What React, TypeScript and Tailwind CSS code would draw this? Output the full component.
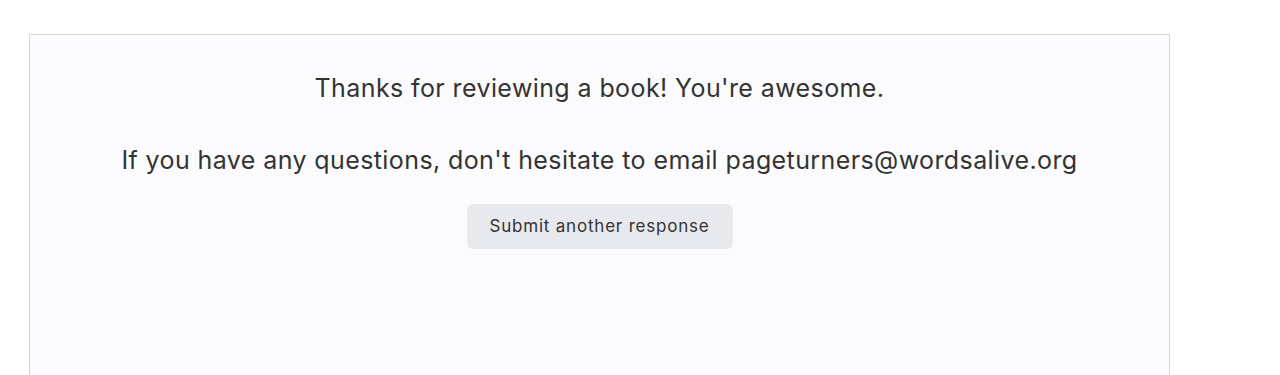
export default function App() {
  return (
    <div className="min-h-screen bg-white pl-[29px] pr-[110px] pt-[34px] font-['Inter',sans-serif] text-[#333333]">
      <div className="h-[400px] border border-[#d6d6d6] bg-[#fbfbfd]">
        <div className="flex flex-col items-center pt-[37px] text-center">
          <p className="text-[25px] leading-[32px] tracking-[0.4px]">Thanks for reviewing a book! You're awesome.</p>
          <p className="mt-[40px] text-[25px] leading-[32px] tracking-[0.4px]">
            If you have any questions, don't hesitate to email pageturners@wordsalive.org
          </p>
          <button className="mt-[28px] h-[45px] w-[266px] rounded-[6px] bg-[#e8e9ef] text-[17px] tracking-[0.8px] text-[#333333]">
            Submit another response
          </button>
        </div>
      </div>
    </div>
  );
}
